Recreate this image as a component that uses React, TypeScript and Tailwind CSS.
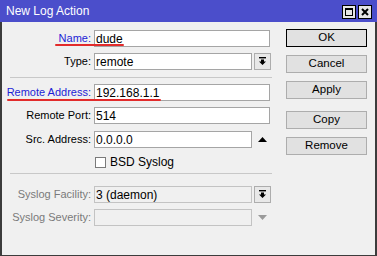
import React from "react";

const font = { fontFamily: '"Liberation Sans", Arial, sans-serif' };

function DropBtn({ disabled }: { disabled?: boolean }) {
  return (
    <div className="w-[17px] h-[17px] border border-[#adadad] bg-[#e8e8e8] flex items-center justify-center">
      <svg width="9" height="9" viewBox="0 0 9 9">
        <rect x="1" y="0" width="7" height="1.4" fill={disabled ? "#9a9a9a" : "#000"} />
        <path d="M3 2.5h3v2h2L4.5 8 1 4.5h2z" fill={disabled ? "#9a9a9a" : "#000"} />
      </svg>
    </div>
  );
}

function Row({
  label,
  value,
  labelClass = "text-black",
  mt,
  width = "w-[176px]",
  after,
  disabled,
  underline,
}: {
  label: string;
  value?: string;
  labelClass?: string;
  mt: string;
  width?: string;
  after?: React.ReactNode;
  disabled?: boolean;
  underline?: React.ReactNode;
}) {
  return (
    <div className={`relative flex items-center h-[17px] ${mt}`}>
      <div className={`w-[92px] shrink-0 text-right pr-[3px] text-[11px] leading-none ${labelClass}`}>{label}</div>
      <div
        className={`${width} h-[17px] border ${disabled ? "border-[#c3c3c3] bg-[#f0f0f0]" : "border-[#a5a5a5] bg-white"} px-[1px] flex items-center text-[12px] text-black leading-none`}
      >
        {value}
      </div>
      {after}
      {underline}
    </div>
  );
}

export default function App() {
  return (
    <div className="w-[377px] h-[256px] flex flex-col bg-[#f0f0f0] select-none" style={font}>
      <div className="h-[22px] bg-[#4b4ecb] flex items-center pl-[6px] pr-[5px] shrink-0">
        <span className="text-white text-[12px] leading-none flex-1">New Log Action</span>
        <div className="flex gap-[2px] mt-[1px]">
          <div className="w-[14px] h-[14px] border border-black bg-[#e6e6e6] flex items-center justify-center">
            <div className="w-[8px] h-[8px] border border-black border-t-2" />
          </div>
          <div className="w-[14px] h-[14px] border border-black bg-[#e6e6e6] flex items-center justify-center">
            <svg width="8" height="8" viewBox="0 0 8 8">
              <path d="M1 1L7 7M7 1L1 7" stroke="#000" strokeWidth="2" />
            </svg>
          </div>
        </div>
      </div>
      <div className="flex-1 flex border-l-2 border-r-2 border-b border-[#3c3c3c]">
        <div className="w-[276px] flex flex-col">
          <Row
            label="Name:"
            value="dude"
            labelClass="text-[#1d1dd6]"
            mt="mt-[8px]"
            underline={<div className="absolute left-[53px] top-[14px] w-[69px] h-[2px] bg-[#e22b2b] rounded-full" />}
          />
          <Row label="Type:" value="remote" mt="mt-[6px]" width="w-[158px]" after={<div className="ml-[2px]"><DropBtn /></div>} />
          <div className="ml-[8px] w-[262px] h-[1px] bg-[#c8c8c8] mt-[7px]" />
          <Row
            label="Remote Address:"
            value="192.168.1.1"
            labelClass="text-[#1d1dd6]"
            mt="mt-[6px]"
            underline={<div className="absolute left-[5px] top-[15px] w-[154px] h-[2px] bg-[#e22b2b] rounded-full" />}
          />
          <Row label="Remote Port:" value="514" mt="mt-[6px]" />
          <Row
            label="Src. Address:"
            value="0.0.0.0"
            mt="mt-[7px]"
            width="w-[158px]"
            after={
              <div className="ml-[6px]">
                <svg width="9" height="5" viewBox="0 0 9 5">
                  <path d="M4.5 0L9 5H0z" fill="#000" />
                </svg>
              </div>
            }
          />
          <div className="flex items-center h-[12px] mt-[8px] pl-[93px]">
            <div className="w-[11px] h-[11px] border border-[#7a7a7a] bg-white" />
            <span className="ml-[4px] text-[12px] leading-none text-black">BSD Syslog</span>
          </div>
          <div className="ml-[8px] w-[262px] h-[1px] bg-[#c8c8c8] mt-[5px]" />
          <Row
            label="Syslog Facility:"
            value="3 (daemon)"
            labelClass="text-[#7a7a7a]"
            mt="mt-[12px]"
            width="w-[158px]"
            disabled
            after={<div className="ml-[2px]"><DropBtn /></div>}
          />
          <Row
            label="Syslog Severity:"
            labelClass="text-[#7a7a7a]"
            mt="mt-[6px]"
            width="w-[158px]"
            disabled
            after={
              <div className="ml-[6px]">
                <svg width="9" height="5" viewBox="0 0 9 5">
                  <path d="M0 0H9L4.5 5z" fill="#9a9a9a" />
                </svg>
              </div>
            }
          />
        </div>
        <div className="flex flex-col pl-[8px] pt-[7px] text-[11.5px] leading-none">
          <div className="w-[81px] h-[18px] border border-black bg-[#e1e1e1] flex items-center justify-center">OK</div>
          <div className="w-[81px] h-[18px] border border-[#adadad] bg-[#e1e1e1] flex items-center justify-center mt-[8px]">Cancel</div>
          <div className="w-[81px] h-[18px] border border-[#adadad] bg-[#e1e1e1] flex items-center justify-center mt-[8px]">Apply</div>
          <div className="w-[81px] h-[18px] border border-[#adadad] bg-[#e1e1e1] flex items-center justify-center mt-[12px]">Copy</div>
          <div className="w-[81px] h-[18px] border border-[#adadad] bg-[#e1e1e1] flex items-center justify-center mt-[8px]">Remove</div>
        </div>
      </div>
    </div>
  );
}
